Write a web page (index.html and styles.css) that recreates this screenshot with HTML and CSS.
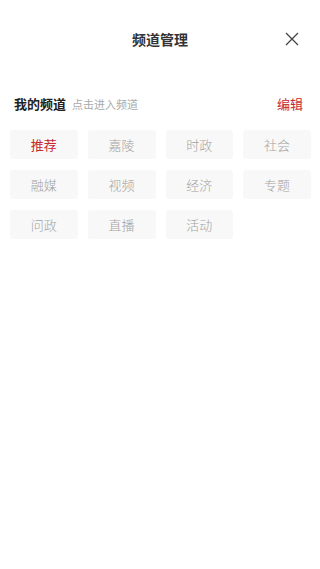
FILE: index.html
```html
<!DOCTYPE html>
<html lang="zh">
<head>
<meta charset="utf-8">
<meta name="viewport" content="width=device-width, initial-scale=1">
<link rel="stylesheet" href="styles.css">
</head>
<body>
<div class="page">
  <header class="topbar">
    <h1 class="title">频道管理</h1>
    <span class="close" aria-label="关闭">
      <svg width="14" height="14" viewBox="0 0 14 14"><path d="M1 1 L13 13 M13 1 L1 13" stroke="#444" stroke-width="1.3" fill="none"/></svg>
    </span>
  </header>
  <section class="section">
    <div class="section-head">
      <div class="section-title"><span class="name">我的频道</span><span class="hint">点击进入频道</span></div>
      <span class="edit">编辑</span>
    </div>
    <div class="grid">
      <div class="tile active">推荐</div>
      <div class="tile">嘉陵</div>
      <div class="tile">时政</div>
      <div class="tile">社会</div>
      <div class="tile">融媒</div>
      <div class="tile">视频</div>
      <div class="tile">经济</div>
      <div class="tile">专题</div>
      <div class="tile">问政</div>
      <div class="tile">直播</div>
      <div class="tile">活动</div>
    </div>
  </section>
</div>
</body>
</html>
```
FILE: styles.css
```css
* { box-sizing: border-box; }
html, body { margin: 0; padding: 0; background: #fff; }
body { font-family: "Noto Sans CJK SC", "Noto Sans", sans-serif; }
.page { width: 320px; min-height: 569px; }
.topbar {
  position: relative;
  height: 80px;
  display: flex;
  align-items: center;
  justify-content: center;
  padding-bottom: 2px;
}
.title {
  margin: 0;
  font-size: 14px;
  font-weight: 700;
  color: #333;
  line-height: 1;
}
.close {
  position: absolute;
  right: 21px;
  top: 32px;
  width: 14px;
  height: 14px;
  display: block;
}
.close svg { display: block; }
.section-head {
  display: flex;
  align-items: center;
  justify-content: space-between;
  padding: 15px 17px 0 14px;
  height: 32px;
}
.section-title { display: flex; align-items: baseline; }
.name { font-size: 13px; font-weight: 700; color: #222; }
.hint { font-size: 11px; color: #aaa; margin-left: 6px; }
.edit { font-size: 13px; color: #c8282e; }
.grid {
  display: grid;
  grid-template-columns: repeat(4, 1fr);
  column-gap: 10px;
  row-gap: 11px;
  padding: 18px 9px 0 10px;
}
.tile {
  height: 29px;
  border-radius: 3px;
  background: #f8f8f8;
  color: #a3a3a3;
  font-size: 13px;
  font-weight: 300;
  display: flex;
  align-items: center;
  justify-content: center;
}
.tile.active { color: #c8282e; font-weight: 400; }
```
